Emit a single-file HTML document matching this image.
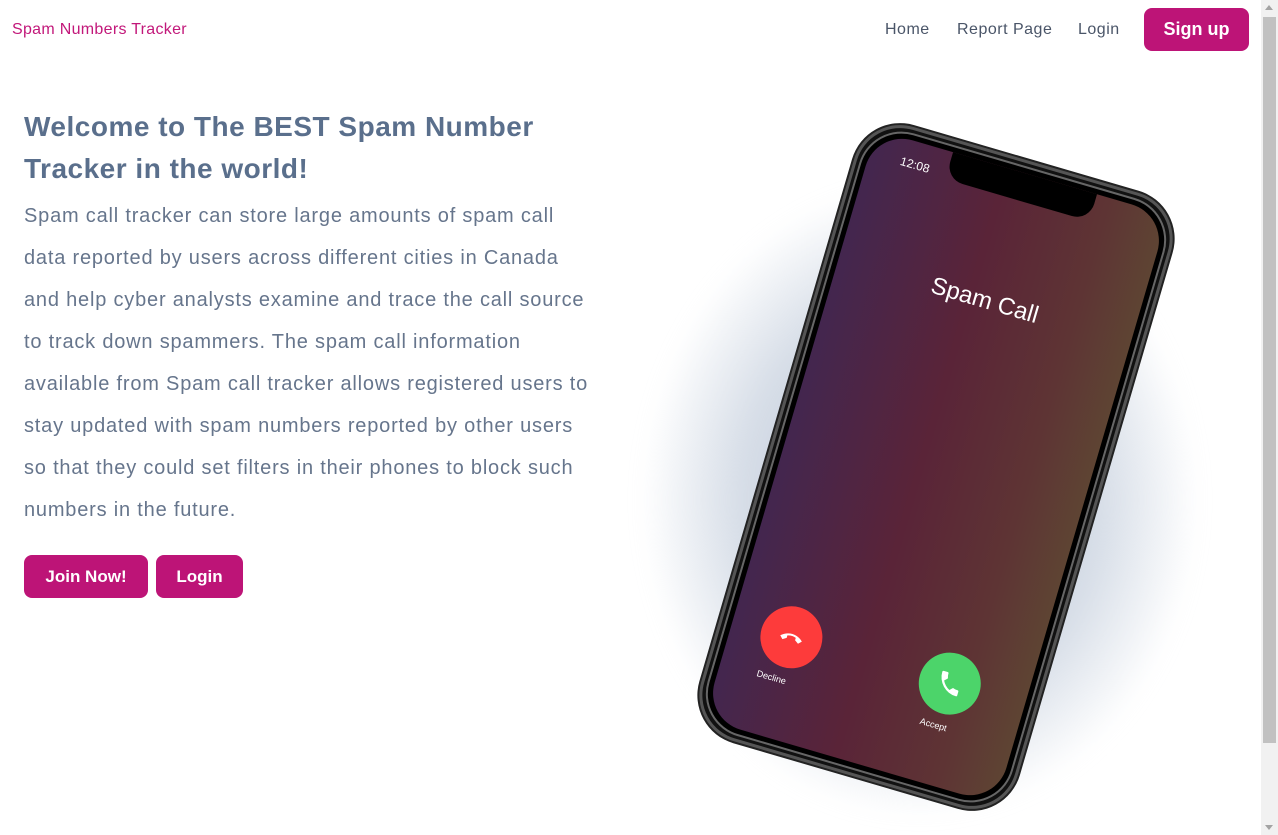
<!DOCTYPE html>
<html><head><meta charset="utf-8"><style>
*{box-sizing:border-box;margin:0;padding:0}
html,body{width:1278px;height:835px;overflow:hidden;background:#fff;font-family:"Liberation Sans",sans-serif}
.brand{position:absolute;left:12px;top:21px;font-size:16px;color:#c2187a;letter-spacing:.3px}
.nav{position:absolute;top:21px;font-size:16px;color:#4a5568;letter-spacing:.5px}
.btn{position:absolute;background:#bd1477;color:#fff;font-weight:bold;border-radius:8px;display:flex;align-items:center;justify-content:center}
h1{position:absolute;left:24px;top:106px;width:620px;font-size:28px;line-height:42px;color:#5a6f8c;font-weight:bold;letter-spacing:.5px;white-space:nowrap}
p{position:absolute;left:24px;top:195px;width:620px;font-size:20px;line-height:42px;color:#66758c;letter-spacing:.8px;white-space:nowrap}
.sb{position:absolute;left:1261px;top:0;width:17px;height:835px;background:#f1f1f1}
.thumb{position:absolute;left:1263px;top:17px;width:13px;height:726px;background:#c1c1c1}
.glow{position:absolute;left:640px;top:180px;width:560px;height:640px;border-radius:50%;background:radial-gradient(ellipse at center,#b8c3d2 0%,#d6dde7 45%,rgba(255,255,255,0) 70%);filter:blur(10px)}
.phone{position:absolute;left:771px;top:147px;width:330px;height:640px;transform:rotate(16.3deg);border-radius:48px;background:#111;border:3px solid #555;box-shadow:0 0 0 2px #222}
.phone .in{position:absolute;left:3px;top:3px;right:3px;bottom:3px;border-radius:44px;background:#000;border:2px solid #666}
.screen{position:absolute;left:5px;top:5px;right:5px;bottom:5px;border-radius:38px;background:linear-gradient(90deg,#43264f 0%,#5a2438 45%,#5e3434 80%,#5e4433 100%);overflow:hidden}
.notch{position:absolute;left:80px;top:-2px;width:150px;height:30px;background:#000;border-radius:0 0 18px 18px}
.t{position:absolute;color:#fff}
.circ{position:absolute;width:62px;height:62px;border-radius:50%;display:flex;align-items:center;justify-content:center}
</style></head><body>
<div class="brand">Spam Numbers Tracker</div>
<div class="nav" style="left:885px">Home</div>
<div class="nav" style="left:957px">Report Page</div>
<div class="nav" style="left:1078px">Login</div>
<div class="btn" style="left:1144px;top:8px;width:105px;height:43px;font-size:18px">Sign up</div>
<h1>Welcome to The BEST Spam Number<br>Tracker in the world!</h1>
<p>Spam call tracker can store large amounts of spam call<br>data reported by users across different cities in Canada<br>and help cyber analysts examine and trace the call source<br>to track down spammers. The spam call information<br>available from Spam call tracker allows registered users to<br>stay updated with spam numbers reported by other users<br>so that they could set filters in their phones to block such<br>numbers in the future.</p>
<div class="btn" style="left:24px;top:555px;width:124px;height:43px;font-size:17px">Join Now!</div>
<div class="btn" style="left:156px;top:555px;width:87px;height:43px;font-size:17px">Login</div>
<div class="glow"></div>
<div class="phone"><div class="in"><div class="screen">
<div class="notch"></div>
<div class="t" style="left:32px;top:16px;font-size:12px">12:08</div>
<div class="t" style="left:0;width:100%;text-align:center;top:120px;font-size:24px">Spam Call</div>
<div class="circ" style="left:30px;top:480px;background:#fd3b3b"><svg width="30" height="30" viewBox="0 0 24 24"><path d="M3 13c5-5 13-5 18 0l-2.5 2.5-3-2v-2c-2-.8-5-.8-7 0v2l-3 2z" fill="#fff"/></svg></div>
<div class="t" style="left:38px;top:550px;font-size:9px">Decline</div>
<div class="circ" style="left:195px;top:480px;background:#4cd46a"><svg width="28" height="28" viewBox="0 0 24 24"><path d="M6.6 10.8a15 15 0 006.6 6.6l2.2-2.2c.3-.3.7-.4 1-.2 1.1.4 2.3.6 3.6.6.6 0 1 .4 1 1V20c0 .6-.4 1-1 1A17 17 0 013 4c0-.6.4-1 1-1h3.5c.6 0 1 .4 1 1 0 1.300.2 2.5.6 3.6.1.3 0 .7-.2 1z" fill="#fff"/></svg></div>
<div class="t" style="left:208px;top:550px;font-size:9px">Accept</div>
</div></div></div>
<div class="sb"></div><div class="thumb"></div>
<div style="position:absolute;left:1265px;top:5px;width:0;height:0;border-left:4px solid transparent;border-right:4px solid transparent;border-bottom:5px solid #a3a3a3"></div>
<div style="position:absolute;left:1265px;top:825px;width:0;height:0;border-left:4px solid transparent;border-right:4px solid transparent;border-top:5px solid #a3a3a3"></div>
</body></html>
